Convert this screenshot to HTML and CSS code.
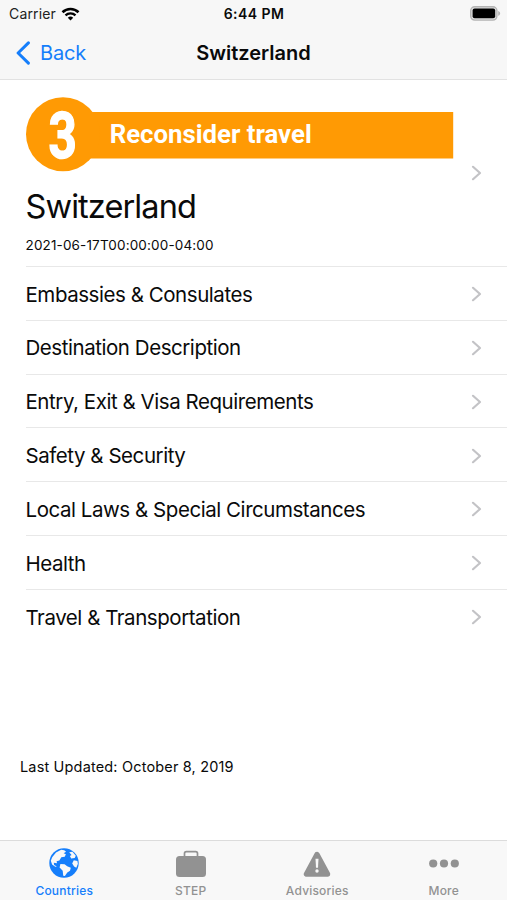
FILE: index.html
```
<!DOCTYPE html>
<html lang="en">

<head>
    <meta charset="UTF-8" />
    <title>Switzerland</title>
    <link rel="stylesheet" href="styles.css">
</head>

<body>
    <!-- Header -->
    <header class="header">
        <div class="statusbar">
            <div class="carrier">
                <span>Carrier</span>
                <svg width="19" height="14" viewBox="0 0 18 14">
                    <path d="M1 5.2a11.5 11.5 0 0 1 16 0" fill="none" stroke="#000" stroke-width="2.6" />
                    <path d="M4 8.4a7.2 7.2 0 0 1 10 0" fill="none" stroke="#000" stroke-width="2.3" />
                    <path d="M9 13.6L6.3 10.8a4 4 0 0 1 5.4 0z" />
                </svg>
            </div>
            <span class="time">6:44 PM</span>
            <svg class="battery" width="31" height="15" viewBox="0 0 31 15">
                <rect x="0.7" y="0.7" width="26.2" height="13.4" rx="4" fill="#e0e0e0" stroke="#b4b4b4" stroke-width="1.4" />
                <rect x="2.6" y="2.5" width="22.6" height="9.8" rx="2" />
                <path d="M28.2 5c2.6.8 2.6 4 0 4.8z" fill="#b4b4b4" />
            </svg>
        </div>
        <div class="navbar">
            <a href="#" class="back">
                <svg width="16" height="24" viewBox="0 0 16 24">
                    <path d="M13.4 1.9L3.1 12l10.3 10.1" fill="none" stroke="#157efb" stroke-width="3" stroke-linecap="round" stroke-linejoin="round" />
                </svg>
                <span>Back</span>
            </a>
            <h1>Switzerland</h1>
        </div>
    </header>

    <!-- Content -->
    <main class="main">
        <a href="#" class="summary">
            <div class="summary-text">
                <svg class="banner" width="428" height="84" viewBox="0.8 -6 428 84">
                    <rect x="37" y="15" width="391" height="46.5" fill="#ff9a04" />
                    <circle cx="37.8" cy="37.2" r="37" fill="#ff9a04" />
                    <text class="level" transform="translate(23.4 60.5) scale(.76 1)">3</text>
                    <text class="advice" x="84.5" y="46" textLength="202" lengthAdjust="spacingAndGlyphs">Reconsider travel</text>
                </svg>
                <h2>Switzerland</h2>
                <p>2021-06-17T00:00:00-04:00</p>
            </div>
            <svg class="chevron" width="12" height="16" viewBox="0 0 12 16"><path d="M2 1.8L9 8l-7 6.2" /></svg>
        </a>
        <nav class="list">
            <a href="#"><span>Embassies &amp; Consulates</span><svg class="chevron" width="12" height="16" viewBox="0 0 12 16"><path d="M2 1.8L9 8l-7 6.2" /></svg></a>
            <a href="#"><span>Destination Description</span><svg class="chevron" width="12" height="16" viewBox="0 0 12 16"><path d="M2 1.8L9 8l-7 6.2" /></svg></a>
            <a href="#"><span>Entry, Exit &amp; Visa Requirements</span><svg class="chevron" width="12" height="16" viewBox="0 0 12 16"><path d="M2 1.8L9 8l-7 6.2" /></svg></a>
            <a href="#"><span>Safety &amp; Security</span><svg class="chevron" width="12" height="16" viewBox="0 0 12 16"><path d="M2 1.8L9 8l-7 6.2" /></svg></a>
            <a href="#"><span>Local Laws &amp; Special Circumstances</span><svg class="chevron" width="12" height="16" viewBox="0 0 12 16"><path d="M2 1.8L9 8l-7 6.2" /></svg></a>
            <a href="#"><span>Health</span><svg class="chevron" width="12" height="16" viewBox="0 0 12 16"><path d="M2 1.8L9 8l-7 6.2" /></svg></a>
            <a href="#"><span>Travel &amp; Transportation</span><svg class="chevron" width="12" height="16" viewBox="0 0 12 16"><path d="M2 1.8L9 8l-7 6.2" /></svg></a>
        </nav>
        <p class="updated">Last Updated: October 8, 2019</p>
    </main>

    <!-- Tab bar -->
    <nav class="tabbar">
        <a href="#" class="active">
            <svg width="32" height="32" viewBox="0 0 32 32">
                <circle cx="16" cy="16" r="14.7" fill="#157efb" />
                <path d="M4.2 10.2L8 5.4l5.2-2.7 3 .6 1.9 1.4-2.5 1.5 2.3 1.1-1.2 2.4-3.4.6-1.9 3.1-2.8.8.4 2-3.2-.4.3 2.3 2.8 1.3-1.6.4-3.2-2.2-1.3-3.9z" fill="#f8f8f8" />
                <path d="M12.4 17l4.2.2 2.6 2 3.6 1.6-.8 3-2.7 1.8-2.4 3.5-1.7-.3-.5-5-3.1-3.2z" fill="#f8f8f8" />
                <path d="M21.2 5.3l3.2-.5 3.4 4-1.1 2.3-3.5.5-1.3-2.5 1.7-1.2zM25.8 13.3l3.6.7.5 2.8-1.6 4-2.2-1.2-1.9-3.2z" fill="#f8f8f8" />
            </svg>
            <span>Countries</span>
        </a>
        <a href="#">
            <svg width="32" height="32" viewBox="0 0 32 32">
                <path d="M9.5 9.5V6.6c0-1.2.7-1.9 1.9-1.9h9.2c1.2 0 1.9.7 1.9 1.9v2.9" fill="none" stroke="#929292" stroke-width="1.7" />
                <rect x="1" y="9" width="30" height="21" rx="3.5" fill="#929292" />
            </svg>
            <span>STEP</span>
        </a>
        <a href="#">
            <svg width="32" height="32" viewBox="0 0 32 32">
                <path d="M16 7.5L5.5 27h21z" fill="#929292" stroke="#929292" stroke-width="5.4" stroke-linejoin="round" />
                <path d="M14.5 11.8h3l-.5 9h-2z" fill="#f8f8f8" />
                <circle cx="16" cy="24" r="1.7" fill="#f8f8f8" />
            </svg>
            <span>Advisories</span>
        </a>
        <a href="#">
            <svg width="32" height="32" viewBox="0 0 32 32" fill="#929292">
                <circle cx="5.2" cy="16.5" r="4.1" />
                <circle cx="16" cy="16.5" r="4.1" />
                <circle cx="26.8" cy="16.5" r="4.1" />
            </svg>
            <span>More</span>
        </a>
    </nav>
</body>

</html>
```
FILE: styles.css
```
* {
    box-sizing: border-box;
    margin: 0;
    padding: 0;
}

body {
    display: flex;
    flex-direction: column;
    height: 900px;
    background: #fff;
    color: #0a0a0a;
    font-family: Inter, "Liberation Sans", sans-serif;
}

a {
    color: inherit;
    text-decoration: none;
}

svg {
    display: block;
    flex: none;
}

/* Header */
.header {
    height: 79.5px;
    background: #f7f7f7;
    border-bottom: 1px solid #e2e2e2;
}

.statusbar,
.navbar {
    display: grid;
    grid-template-columns: 1fr auto 1fr;
    align-items: center;
}

.statusbar {
    height: 27px;
    padding: 0 6px 0 9px;
}

.carrier {
    display: flex;
    align-items: center;
    gap: 5px;
    font-size: 14px;
    letter-spacing: 0.15px;
    color: #222;
}

.time {
    margin-left: -2px;
    font-size: 14px;
    font-weight: 600;
    letter-spacing: 0.45px;
}

.battery {
    justify-self: end;
}

.navbar {
    height: 51px;
    padding: 0 15px;
}

.back {
    display: flex;
    align-items: center;
    gap: 9px;
    color: #157efb;
    font-size: 20px;
    letter-spacing: -0.2px;
}

.navbar h1 {
    font-size: 20px;
    font-weight: 600;
}

/* Content */
.main {
    flex: 1;
}

.summary {
    display: flex;
    align-items: center;
    justify-content: space-between;
    height: 187.5px;
    margin-left: 25.5px;
    padding-right: 24px;
    border-bottom: 1px solid #e8e8e8;
}

.summary h2 {
    margin-top: 11px;
    font-size: 32.5px;
    font-weight: 400;
    letter-spacing: -0.9px;
    line-height: 42px;
}

.summary p {
    margin-top: 8px;
    font-size: 13.5px;
    letter-spacing: 0.15px;
    line-height: 18px;
}

.level {
    font: bold 65px Roboto, sans-serif;
    fill: #fff;
    stroke: #fff;
    stroke-width: 1.5px;
}

.advice {
    font: bold 26px Roboto, sans-serif;
    fill: #fff;
}

.chevron path {
    fill: none;
    stroke: #c3c3c6;
    stroke-width: 2.2;
    stroke-linecap: round;
    stroke-linejoin: round;
}

.list {
    margin-left: 25.5px;
}

.list a {
    display: flex;
    align-items: center;
    justify-content: space-between;
    height: 53.8px;
    padding: 1.5px 24px 0 0;
    border-bottom: 1px solid #e8e8e8;
    font-size: 20.5px;
    letter-spacing: -0.45px;
}

.list a:last-child {
    border-bottom: none;
}

.updated {
    margin: 114px 0 0 20px;
    font-size: 14.5px;
    letter-spacing: 0.16px;
    line-height: 18px;
}

/* Tab bar */
.tabbar {
    display: grid;
    grid-template-columns: repeat(4, 1fr);
    height: 60px;
    padding: 6px 0 0 1px;
    background: #f8f8f8;
    border-top: 1px solid #dcdcdc;
    color: #929292;
    font-size: 12px;
    font-weight: 500;
    letter-spacing: 0.2px;
}

.tabbar a {
    display: flex;
    flex-direction: column;
    align-items: center;
    gap: 4px;
}

.tabbar a.active {
    color: #157efb;
}
```
